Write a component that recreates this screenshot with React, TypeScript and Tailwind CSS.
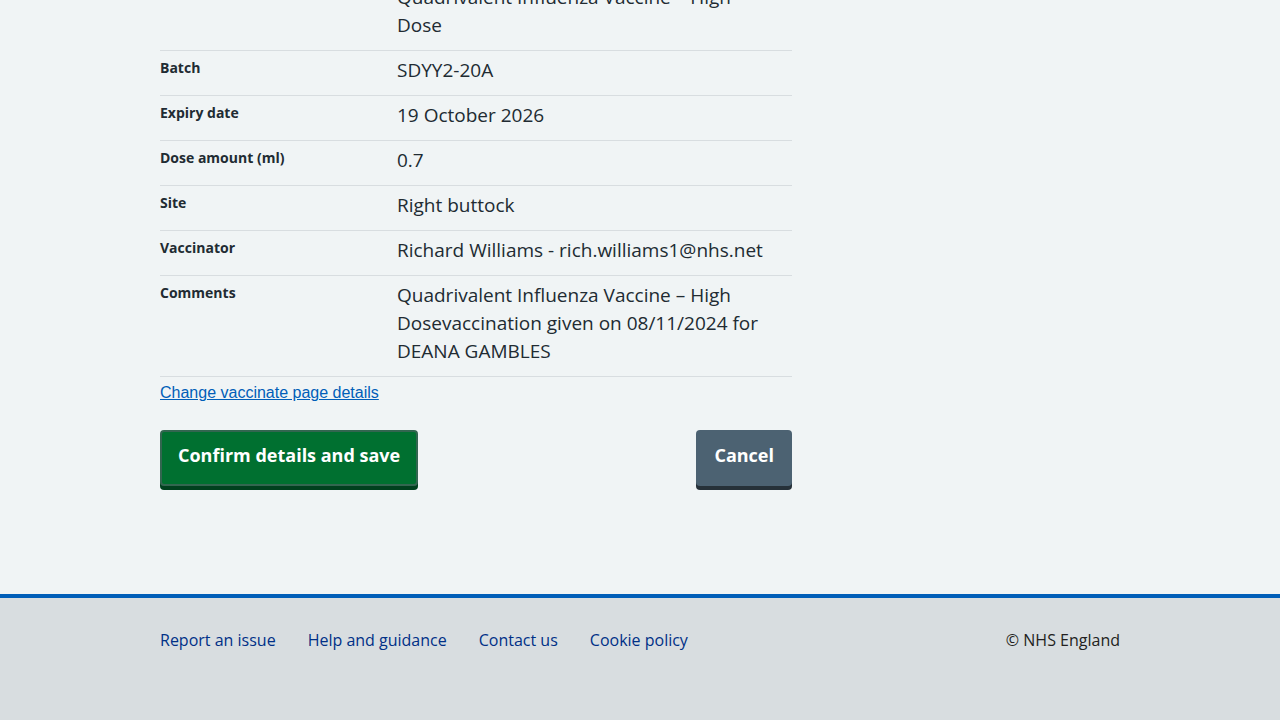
const rows = [
  { label: "Vaccine", value: "Quadrivalent Influenza Vaccine – High Dose" },
  { label: "Batch", value: "SDYY2-20A" },
  { label: "Expiry date", value: "19 October 2026" },
  { label: "Dose amount (ml)", value: "0.7" },
  { label: "Site", value: "Right buttock" },
  { label: "Vaccinator", value: "Richard Williams - rich.williams1@nhs.net" },
  { label: "Comments", value: "Quadrivalent Influenza Vaccine – High Dosevaccination given on 08/11/2024 for DEANA GAMBLES" },
];

const links = ["Report an issue", "Help and guidance", "Contact us", "Cookie policy"];

export default function App() {
  return (
    <div className="flex h-screen flex-col justify-end overflow-hidden bg-[#f0f4f5] font-['Open_Sans',sans-serif] text-[#212b32]">
      <main className="mx-auto w-full max-w-[960px] pb-27">
        <div className="w-full max-w-[632px]">
          <dl>
            {rows.map((r) => (
              <div key={r.label} className="flex border-b border-[#d8dde0] pt-[5px] pb-[11px]">
                <dt className="w-3/8 shrink-0 text-sm leading-6 font-bold">{r.label}</dt>
                <dd className="min-w-0 flex-1 pr-5 text-[19px] leading-7">{r.value}</dd>
              </div>
            ))}
          </dl>
          <a href="#change" className="mt-1 inline-block font-['Liberation_Sans',sans-serif] text-base text-[#005eb8] underline">
            Change vaccinate page details
          </a>
          <div className="mt-[25px] flex justify-between text-lg leading-6 font-bold text-white">
            <button type="button" className="h-14 rounded border-2 border-[#336650] bg-[#007030] px-4 pb-1.5 shadow-[0_4px_0_#00401e]">
              Confirm details and save
            </button>
            <button type="button" className="h-14 rounded border-2 border-transparent bg-[#4c6272] bg-origin-border px-4 pb-1.5 shadow-[0_4px_0_#263139]">
              Cancel
            </button>
          </div>
        </div>
      </main>
      <footer className="shrink-0 border-t-4 border-[#005eb8] bg-[#d8dde0] pt-[30px] pb-17">
        <div className="mx-auto flex max-w-[960px] justify-between text-base leading-6">
          <ul className="flex gap-8">
            {links.map((l) => (
              <li key={l}>
                <a href="#footer" className="text-[#003087]">{l}</a>
              </li>
            ))}
          </ul>
          <p className="text-[#231f20]">© NHS England</p>
        </div>
      </footer>
    </div>
  );
}
